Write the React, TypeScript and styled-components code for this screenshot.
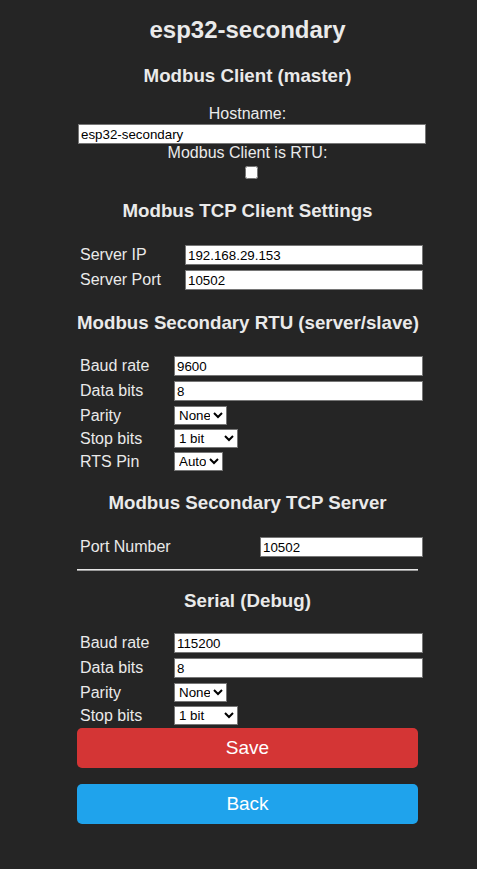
import React from "react";
import styled, { createGlobalStyle } from "styled-components";

const Global = createGlobalStyle`
  html, body {
    margin: 0;
    padding: 0;
    background: #252525;
  }
  body {
    font-family: "Liberation Sans", Arial, sans-serif;
    font-size: 16px;
    color: #eaeaea;
  }
`;

const Page = styled.div`
  width: 341px;
  margin-left: 77px;
  padding-bottom: 44px;
  display: flex;
  flex-direction: column;
  align-items: stretch;
`;

const Title = styled.h1`
  margin: 16px 0 0;
  font-size: 24px;
  line-height: 28px;
  font-weight: bold;
  text-align: center;
`;

const SectionTitle = styled.h3<{ $mt: number }>`
  margin: ${(p) => p.$mt}px 0 0;
  font-size: 18.72px;
  line-height: 22px;
  font-weight: bold;
  text-align: center;
  white-space: nowrap;
`;

const CenterLabel = styled.div<{ $mt: number }>`
  margin-top: ${(p) => p.$mt}px;
  line-height: 18px;
  text-align: center;
`;

const WideInput = styled.input`
  box-sizing: border-box;
  width: 348px;
  height: 20px;
  margin: 1px 0 0 1px;
  padding: 0 2px;
  font-family: "Liberation Sans", Arial, sans-serif;
  font-size: 13.33px;
  color: #000;
  background: #fff;
  border: 1px solid #767676;
  border-radius: 0;
  outline: none;
`;

const CheckRow = styled.div`
  display: flex;
  justify-content: center;
  margin-top: 4px;
`;

const Check = styled.input`
  width: 13px;
  height: 13px;
  margin: 0 0 0 8px;
`;

const Form = styled.div<{ $mt: number; $labelW: number; $ctrlW: number }>`
  margin-top: ${(p) => p.$mt}px;
  padding-left: 3px;
  display: grid;
  grid-template-columns: ${(p) => p.$labelW}px ${(p) => p.$ctrlW}px;
`;

const Row = styled.div`
  display: contents;
`;

const Label = styled.div<{ $select?: boolean }>`
  height: ${(p) => (p.$select ? 19 : 20)}px;
  margin-bottom: ${(p) => (p.$select ? 4 : 5)}px;
  display: flex;
  align-items: center;
  line-height: 18px;
  white-space: nowrap;
`;

const Field = styled.input`
  box-sizing: border-box;
  width: 100%;
  height: 20px;
  margin: 0 0 5px;
  padding: 0 2px;
  font-family: "Liberation Sans", Arial, sans-serif;
  font-size: 13.33px;
  color: #000;
  background: #fff;
  border: 1px solid #767676;
  border-radius: 0;
  outline: none;
`;

const SelectWrap = styled.div`
  height: 19px;
  margin-bottom: 4px;
`;

const Select = styled.select<{ $w: number }>`
  box-sizing: border-box;
  width: ${(p) => p.$w}px;
  height: 19px;
  margin: 0;
  font-family: "Liberation Sans", Arial, sans-serif;
  font-size: 13.33px;
  color: #000;
  background-color: #fff;
`;

const Rule = styled.hr`
  margin: 7px 0 0;
  height: 0;
  border: 0;
  border-top: 1px solid #e6e6e6;
  border-bottom: 1px solid #9a9a9a;
`;

const Button = styled.button<{ $tone: "red" | "blue"; $mt: number }>`
  margin-top: ${(p) => p.$mt}px;
  height: 40px;
  width: 100%;
  border: 0;
  border-radius: 5px;
  background: ${(p) => (p.$tone === "red" ? "#d43535" : "#1fa3ec")};
  color: #fff;
  font-family: "Liberation Sans", Arial, sans-serif;
  font-size: 19px;
  line-height: 40px;
  padding: 0;
`;

type FieldDef =
  | { label: string; value: string }
  | { label: string; options: string[]; w: number };

const FormBlock: React.FC<{ mt: number; labelW: number; ctrlW: number; fields: FieldDef[] }> = ({
  mt,
  labelW,
  ctrlW,
  fields,
}) => (
  <Form $mt={mt} $labelW={labelW} $ctrlW={ctrlW}>
    {fields.map((f) =>
      "value" in f ? (
        <Row key={f.label}>
          <Label>{f.label}</Label>
          <Field type="text" defaultValue={f.value} />
        </Row>
      ) : (
        <Row key={f.label}>
          <Label $select>{f.label}</Label>
          <SelectWrap>
            <Select $w={f.w} defaultValue={f.options[0]}>
              {f.options.map((o) => (
                <option key={o}>{o}</option>
              ))}
            </Select>
          </SelectWrap>
        </Row>
      )
    )}
  </Form>
);

const serialFields = (baud: string, rts: boolean): FieldDef[] => {
  const list: FieldDef[] = [
    { label: "Baud rate", value: baud },
    { label: "Data bits", value: "8" },
    { label: "Parity", options: ["None", "Even", "Odd"], w: 53 },
    { label: "Stop bits", options: ["1 bit", "1.5 bits", "2 bits"], w: 64 },
  ];
  if (rts) list.push({ label: "RTS Pin", options: ["Auto", "-1"], w: 49 });
  return list;
};

export default function App() {
  return (
    <>
      <Global />
      <Page>
        <Title>esp32-secondary</Title>
        <SectionTitle $mt={21}>Modbus Client (master)</SectionTitle>
        <CenterLabel $mt={18}>Hostname:</CenterLabel>
        <WideInput type="text" defaultValue="esp32-secondary" />
        <CenterLabel $mt={0}>Modbus Client is RTU:</CenterLabel>
        <CheckRow>
          <Check type="checkbox" />
        </CheckRow>

        <SectionTitle $mt={21}>Modbus TCP Client Settings</SectionTitle>
        <FormBlock
          mt={23}
          labelW={105}
          ctrlW={238}
          fields={[
            { label: "Server IP", value: "192.168.29.153" },
            { label: "Server Port", value: "10502" },
          ]}
        />

        <SectionTitle $mt={17}>Modbus Secondary RTU (server/slave)</SectionTitle>
        <FormBlock mt={22} labelW={94} ctrlW={249} fields={serialFields("9600", true)} />

        <SectionTitle $mt={17}>Modbus Secondary TCP Server</SectionTitle>
        <FormBlock
          mt={23}
          labelW={180}
          ctrlW={163}
          fields={[{ label: "Port Number", value: "10502" }]}
        />
        <Rule />

        <SectionTitle $mt={19}>Serial (Debug)</SectionTitle>
        <FormBlock mt={21} labelW={94} ctrlW={249} fields={serialFields("115200", false)} />

        <Button $tone="red" $mt={-1}>Save</Button>
        <Button $tone="blue" $mt={16}>Back</Button>
      </Page>
    </>
  );
}
